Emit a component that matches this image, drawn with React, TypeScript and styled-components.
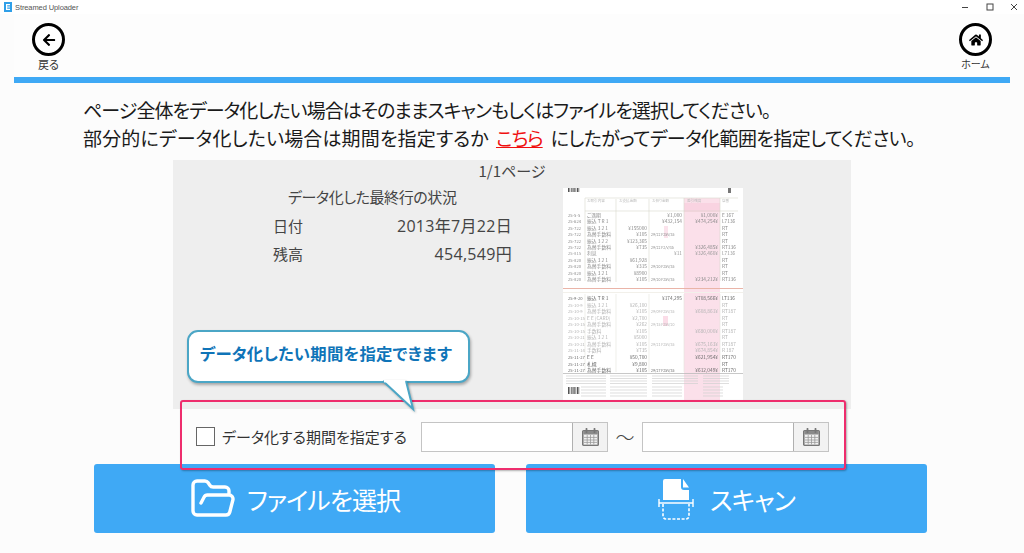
import { ReactElement } from 'react';
import styled, { createGlobalStyle } from 'styled-components';
import { FaArrowLeft, FaHome } from 'react-icons/fa';
import { FolderOpen } from 'lucide-react';

const GlobalStyle = createGlobalStyle`
  html, body {
    margin: 0;
    padding: 0;
    background: #fcfcfc;
  }
  * {
    box-sizing: border-box;
  }
  body {
    font-family: "Noto Sans CJK JP", "Noto Sans", sans-serif;
    font-feature-settings: "palt";
    color: #222;
  }
`;

const ScWindow = styled.div`
  position: relative;
  width: 1024px;
  height: 553px;
  overflow: hidden;
  display: flex;
  flex-direction: column;
`;
const ScTitleBar = styled.div`
  height: 14px;
  background: #fff;
  display: flex;
  align-items: center;
  padding-left: 4px;
  gap: 3px;
`;
const ScAppName = styled.span`
  font-family: "Liberation Sans", sans-serif;
  font-size: 7.5px;
  color: #555;
  flex: 1;
  letter-spacing: -0.1px;
`;
const ScWinControls = styled.div`
  display: flex;
  width: 62px;
  gap: 16.5px;
  align-items: center;
`;
const ScHeader = styled.header`
  height: 63px;
  margin: 0 14px;
  padding: 9px 18px 0 18px;
  background: #fdfdfd;
  display: flex;
  justify-content: space-between;
`;
const ScNavButton = styled.div`
  width: 33px;
  display: flex;
  flex-direction: column;
  align-items: center;
`;
const ScNavCircle = styled.div`
  width: 33px;
  height: 33px;
  border: 3px solid #000;
  border-radius: 50%;
  background: #fff;
  display: flex;
  align-items: center;
  justify-content: center;
  flex: none;
`;
const ScNavLabel = styled.span<{ $size: number }>`
  font-size: ${p => p.$size}px;
  line-height: 14px;
  margin-top: 1px;
  color: #333;
  white-space: nowrap;
`;
const ScBlueBar = styled.div`
  height: 6px;
  margin: 0 14px;
  background: #3fa9f5;
`;
const ScMain = styled.main`
  flex: 1;
  display: flex;
  flex-direction: column;
  align-items: center;
`;
const ScIntro = styled.div`
  width: 100%;
  padding: 13px 0 0 83px;
  height: 77px;
  font-size: 19px;
  line-height: 28px;
  color: #1a1a1a;
  white-space: nowrap;
`;
const ScIntroPart = styled.span<{ $tracking: number }>`
  letter-spacing: ${p => p.$tracking}px;
`;
const ScLink = styled.a`
  color: #f01010;
  text-decoration: underline;
  margin: 0 8px 0 7px;
  letter-spacing: -1px;
`;
const ScPanel = styled.section`
  width: 678px;
  height: 249px;
  background: #eee;
  display: grid;
  grid-template-columns: 390px 180px 1fr;
  grid-template-rows: 28px 1fr;
`;
const ScPageNo = styled.div`
  grid-column: 1 / -1;
  text-align: center;
  font-size: 15px;
  line-height: 21px;
  color: #444;
`;
const ScStatus = styled.div`
  padding: 0 0 0 100px;
  margin-top: -3px;
  color: #444;
  font-size: 15px;
`;
const ScStatusTitle = styled.div`
  line-height: 24px;
  margin: 0 0 0 15px;
  height: 29px;
  letter-spacing: -0.4px;
  white-space: nowrap;
`;
const ScStatusRow = styled.div`
  display: flex;
  justify-content: space-between;
  height: 28px;
  line-height: 24px;
  width: 239px;
`;
const ScStatusValue = styled.span`
  font-size: 16px;
  font-feature-settings: normal;
  font-family: "Open Sans", "Noto Sans CJK JP", sans-serif;
  letter-spacing: 0.3px;
`;
const ScDocument = styled.div`
  grid-column: 2;
  grid-row: 2;
  width: 180px;
  height: 212px;
  background: #fff;
  overflow: hidden;
  filter: blur(0.3px);
`;
const ScDateRow = styled.div`
  width: 678px;
  height: 55px;
  display: flex;
  align-items: center;
  padding: 0 0 0 23px;
`;
const ScCheckbox = styled.span`
  width: 19px;
  height: 19px;
  border: 1px solid #666;
  background: #fff;
  flex: none;
`;
const ScCheckLabel = styled.span`
  font-size: 15px;
  color: #333;
  margin-left: 7px;
  width: 199px;
  white-space: nowrap;
`;
const ScDateField = styled.div`
  display: flex;
  width: 187px;
  height: 30px;
  border: 1px solid #c4c4c4;
  background: #fff;
`;
const ScDateInput = styled.div`
  flex: 1;
  border-right: 1px solid #b0b0b0;
`;
const ScDateButton = styled.div`
  width: 34px;
  background: #f2f2f2;
  display: flex;
  align-items: center;
  justify-content: center;
`;
const ScTilde = styled.span`
  width: 34px;
  text-align: center;
  font-size: 19px;
  font-weight: 300;
  line-height: 30px;
  color: #444;
`;
const ScActions = styled.div`
  width: 833px;
  align-self: flex-start;
  margin-left: 94px;
  display: flex;
  justify-content: space-between;
`;
const ScAction = styled.button`
  width: 401px;
  height: 69px;
  border: 0;
  border-radius: 3px;
  background: #3fa9f5;
  color: #fff;
  font-family: inherit;
  font-feature-settings: "palt";
  font-size: 25px;
  letter-spacing: -0.9px;
  display: flex;
  align-items: center;
  justify-content: center;
`;
const ScHighlight = styled.div`
  position: absolute;
  left: 180px;
  top: 400px;
  width: 666px;
  height: 70px;
  border: 2px solid #ee2d6d;
  border-radius: 3px;
  box-shadow: 1px 1px 2px rgba(0, 0, 0, 0.3);
`;
const ScCallout = styled.div`
  position: absolute;
  left: 187px;
  top: 330px;
  width: 283px;
  height: 53px;
  background: #fff;
  border: 2px solid #4ba6c6;
  border-radius: 11px;
  box-shadow: 1px 2px 3px rgba(0, 0, 0, 0.3);
  color: #0f74b8;
  font-size: 16.4px;
  font-weight: 700;
  letter-spacing: 0.2px;
  line-height: 42px;
  padding-left: 11px;
  white-space: nowrap;
`;
const ScCalloutTail = styled.svg`
  position: absolute;
  left: 382px;
  top: 380px;
  overflow: visible;
  filter: drop-shadow(1px 1px 1px rgba(0, 0, 0, 0.3));
`;

type DocRow = [string, string, string, string, string, string, string];

const topRows: DocRow[] = [
  ['25-5-5', 'ご満期', '', '', '¥1,000', '¥1,000¥', 'E 167'],
  ['25-624', '振込 T R 1', '', '', '¥432,154', '¥474,254¥', 'L7136'],
  ['25-722', '振込 3 2 1', '¥155000', '', '', '', 'RT'],
  ['25-722', '為替手数料', '¥105', '29/22 F25V/35', '', '', 'RT'],
  ['25-722', '振込 3 2 2', '¥123,365', '', '', '', 'RT'],
  ['25-722', '為替手数料', '¥735', '29/22 F2/V/35', '', '¥326,485¥', 'RT136'],
  ['25-815', '利息', '', '', '¥11', '¥326,460¥', 'L7136'],
  ['25-820', '振込 3 2 1', '¥61,928', '', '', '', 'RT'],
  ['25-820', '為替手数料', '¥315', '29/20 F25V/35', '', '', 'RT'],
  ['25-820', '振込 3 2 1', '¥8900', '', '', '', 'RT'],
  ['25-820', '為替手数料', '¥105', '29/20 F25V/35', '', '¥234,212¥', 'RT136'],
];
const bottomRows: DocRow[] = [
  ['25-9-20', '振込 T R 1', '', '', '¥174,295', '¥708,566¥', 'LT136'],
  ['25-10-9', '振込 3 2 1', '¥26,100', '', '', '', 'RT'],
  ['25-10-9', '為替手数料', '¥105', '29/09 F25V/35', '', '¥608,861¥', 'RT187'],
  ['25-10-15', 'E E (CARD)', '¥2,700', '', '', '', 'RT'],
  ['25-10-15', '為替手数料', '¥262', '29/15 F25V/20', '', '', 'RT'],
  ['25-10-15', '手数料', '¥105', '', '', '¥680,000¥', 'RT187'],
  ['25-10-21', '振込 3 2 1', '¥5000', '', '', '', 'RT'],
  ['25-10-21', '為替手数料', '¥105', '29/21 F25V/35', '', '¥675,163¥', 'RT187'],
  ['25-11-14', '手数料', '¥735', '', '', '¥674,854¥', 'R 187'],
  ['25-11-27', 'E E', '¥50,700', '', '', '¥621,954¥', 'RT170'],
  ['25-11-27', '札幌', '¥9,800', '', '', '', 'RT'],
  ['25-11-27', '為替手数料', '¥105', '29/27 F25V/35', '', '¥612,049¥', 'RT170'],
];

function DocRows({ rows, y, step, fade }: { rows: DocRow[]; y: number; step: number; fade: (i: number) => string }): ReactElement {
  return <g fontFamily="'Noto Sans CJK JP', sans-serif" fontSize="4.8">
    {rows.map((r, i) => {
      const ty = y + i * step;

      return <g key={i} fill={fade(i)}>
        <text x="5" y={ty} fontSize="4.2">{r[0]}</text>
        <text x="24" y={ty}>{r[1]}</text>
        <text x="84" y={ty} textAnchor="end">{r[2]}</text>
        <text x="88" y={ty} fontSize="3.6">{r[3]}</text>
        <text x="119" y={ty} textAnchor="end">{r[4]}</text>
        <text x="155" y={ty} textAnchor="end">{r[5]}</text>
        <text x="159" y={ty}>{r[6]}</text>
      </g>;
    })}
  </g>;
}

function Barcode({ x, y, height, width }: { x: number; y: number; height: number; width: number }): ReactElement {
  const bars = Array.from({ length: Math.floor(width / 1.5) }, (_, i) => i);

  return <g fill="#555">
    {bars.map(i => <rect key={i} x={x + i * 1.5} y={y} width={i % 3 === 0 ? 1.1 : 0.7} height={height} />)}
  </g>;
}

function ScanDocument(): ReactElement {
  return <svg width="180" height="212" viewBox="0 0 180 212">
    <rect x="121" y="10" width="36" height="202" fill="#fbe0ea" />
    <rect x="121" y="15" width="36" height="9" fill="#f9d3e1" />
    <rect x="101" y="38" width="4" height="12" fill="#fbe3ec" />
    <rect x="100" y="128" width="5" height="10" fill="#fbdde8" />
    <Barcode x={5} y={0} width={12} height={4} />
    <rect x="165" y="0" width="3" height="5" fill="#777" />
    <g fill="#bbb" fontFamily="'Noto Sans CJK JP', sans-serif" fontSize="3.6">
      <text x="24" y="14">お取引内容</text>
      <text x="56" y="14">お支払金額</text>
      <text x="89" y="14">お預り金額</text>
      <text x="124" y="14">差引残高</text>
      <text x="159" y="14">店番</text>
    </g>
    <path d="M22 10v83M53 11v83M86 11v83M121 10v83M157 10v83M22 23H175M22 10H175" stroke="#d8d8cc" strokeWidth="0.6" fill="none" />
    <DocRows rows={topRows} y={29} step={6.4} fade={i => i === 6 ? '#999' : '#8a8a8a'} />
    <rect x="0" y="100" width="180" height="1" fill="#eab4a8" />
    <rect x="0" y="104" width="180" height="1" fill="#f2f0ea" />
    <path d="M22 106v78M53 106v78M86 106v78M121 106v78M157 106v78" stroke="#e4e4dc" strokeWidth="0.6" fill="none" />
    <DocRows rows={bottomRows} y={112} step={6.55} fade={i => i < 1 || i > 8 ? '#6a6a6a' : '#b4b4b4'} />
    <rect x="0" y="185" width="180" height="0.8" fill="#bbb" />
    <g stroke="#d0d0d0" strokeWidth="0.7">
      {[188, 190.5, 193, 195.5].map(y => <g key={y}>
        <path d={`M3 ${y}h40`} />
        <path d={`M47 ${y}h37`} />
        <path d={`M89 ${y}h46`} />
        <path d={`M140 ${y}h26`} />
      </g>)}
      {[199, 202, 205, 208].map(y => <g key={y}>
        <path d={`M18 ${y}h25`} />
        <path d={`M47 ${y}h37`} />
        <path d={`M89 ${y}h30`} />
        <path d={`M140 ${y}h20`} />
      </g>)}
    </g>
    <Barcode x={5} y={199} width={12} height={7} />
  </svg>;
}

function CalendarIcon(): ReactElement {
  return <svg width="17" height="18" viewBox="0 0 17 18">
    <rect x="0.6" y="2.6" width="15.8" height="14.8" rx="1" fill="#bbb" stroke="#777" strokeWidth="1.2" />
    <rect x="1.4" y="3" width="14.2" height="3" fill="#8a8a8a" />
    <path d="M4.5 0.8v3.4M12.5 0.8v3.4" stroke="#777" strokeWidth="1.8" strokeLinecap="round" />
    <path d="M2 7h13v9.4H2z" fill="#f2f2f2" />
    <path d="M2 9.4h13M2 12h13M2 14.4h13M5.2 7v9.4M8.5 7v9.4M11.8 7v9.4" stroke="#999" strokeWidth="0.8" />
  </svg>;
}

function ScanIcon(): ReactElement {
  return <svg width="36" height="42" viewBox="0 0 36 42" style={{ marginRight: 16 }}>
    <path d="M5 3a2 2 0 0 1 2-2h16v8a3 3 0 0 0 3 3h5v10H5z" fill="#fff" />
    <path d="M25 1l6 8.6h-6z" fill="#fff" />
    <path d="M1 21v8M35 21v8" stroke="#fff" strokeWidth="1.4" />
    <path d="M1 25h34" stroke="#fff" strokeWidth="1.6" />
    <path d="M5 26v12a3 3 0 0 0 3 3h20a3 3 0 0 0 3-3V26" stroke="#fff" strokeWidth="1.6" strokeDasharray="3 1.6" fill="none" />
  </svg>;
}

function AppLogo(): ReactElement {
  return <svg width="8" height="10" viewBox="0 0 8 10">
    <rect width="8" height="10" fill="#2f9fe8" />
    <path d="M2 2h4v1.2H3.2v1.2H6v1.2H3.2v1.2H6V8H2z" fill="#fff" />
  </svg>;
}

function WindowControls(): ReactElement {
  return <ScWinControls>
    <svg width="7" height="8" viewBox="0 0 7 8"><path d="M0 4.5h6" stroke="#444" /></svg>
    <svg width="8" height="8" viewBox="0 0 8 8"><rect x="1" y="1" width="6" height="6" fill="none" stroke="#444" /></svg>
    <svg width="8" height="8" viewBox="0 0 8 8"><path d="M1 1l6 6M7 1L1 7" stroke="#444" /></svg>
  </ScWinControls>;
}

export default function App(): ReactElement {
  return <ScWindow>
    <GlobalStyle />
    <ScTitleBar>
      <AppLogo />
      <ScAppName>Streamed Uploader</ScAppName>
      <WindowControls />
    </ScTitleBar>
    <ScHeader>
      <ScNavButton>
        <ScNavCircle><FaArrowLeft size={14} color="#000" /></ScNavCircle>
        <ScNavLabel $size={11}>戻る</ScNavLabel>
      </ScNavButton>
      <ScNavButton>
        <ScNavCircle><FaHome size={14} color="#000" /></ScNavCircle>
        <ScNavLabel $size={10}>ホーム</ScNavLabel>
      </ScNavButton>
    </ScHeader>
    <ScBlueBar />
    <ScMain>
      <ScIntro>
        <div><ScIntroPart $tracking={-0.95}>ページ全体をデータ化したい場合はそのままスキャンもしくはファイルを選択してください。</ScIntroPart></div>
        <div>
          <ScIntroPart $tracking={0.15}>部分的にデータ化したい場合は期間を指定するか</ScIntroPart>
          <ScLink>こちら</ScLink>
          <ScIntroPart $tracking={-0.6}>にしたがってデータ化範囲を指定してください。</ScIntroPart>
        </div>
      </ScIntro>
      <ScPanel>
        <ScPageNo>1/1ページ</ScPageNo>
        <ScStatus>
          <ScStatusTitle>データ化した最終行の状況</ScStatusTitle>
          <ScStatusRow><span>日付</span><ScStatusValue>2013年7月22日</ScStatusValue></ScStatusRow>
          <ScStatusRow><span>残高</span><ScStatusValue>454,549円</ScStatusValue></ScStatusRow>
        </ScStatus>
        <ScDocument><ScanDocument /></ScDocument>
      </ScPanel>
      <ScDateRow>
        <ScCheckbox />
        <ScCheckLabel>データ化する期間を指定する</ScCheckLabel>
        <ScDateField>
          <ScDateInput />
          <ScDateButton><CalendarIcon /></ScDateButton>
        </ScDateField>
        <ScTilde>～</ScTilde>
        <ScDateField>
          <ScDateInput />
          <ScDateButton><CalendarIcon /></ScDateButton>
        </ScDateField>
      </ScDateRow>
      <ScActions>
        <ScAction>
          <FolderOpen size={48} strokeWidth={1.7} style={{ marginRight: 10 }} />
          ファイルを選択
        </ScAction>
        <ScAction>
          <ScanIcon />
          スキャン
        </ScAction>
      </ScActions>
    </ScMain>
    <ScHighlight />
    <ScCallout>データ化したい期間を指定できます</ScCallout>
    <ScCalloutTail width="50" height="30" viewBox="0 0 50 30">
      <path d="M1 1L31 29L24 1" fill="#fff" stroke="#4ba6c6" strokeWidth="2" />
      <rect x="2" y="0" width="21" height="2.4" fill="#fff" />
    </ScCalloutTail>
  </ScWindow>;
}
